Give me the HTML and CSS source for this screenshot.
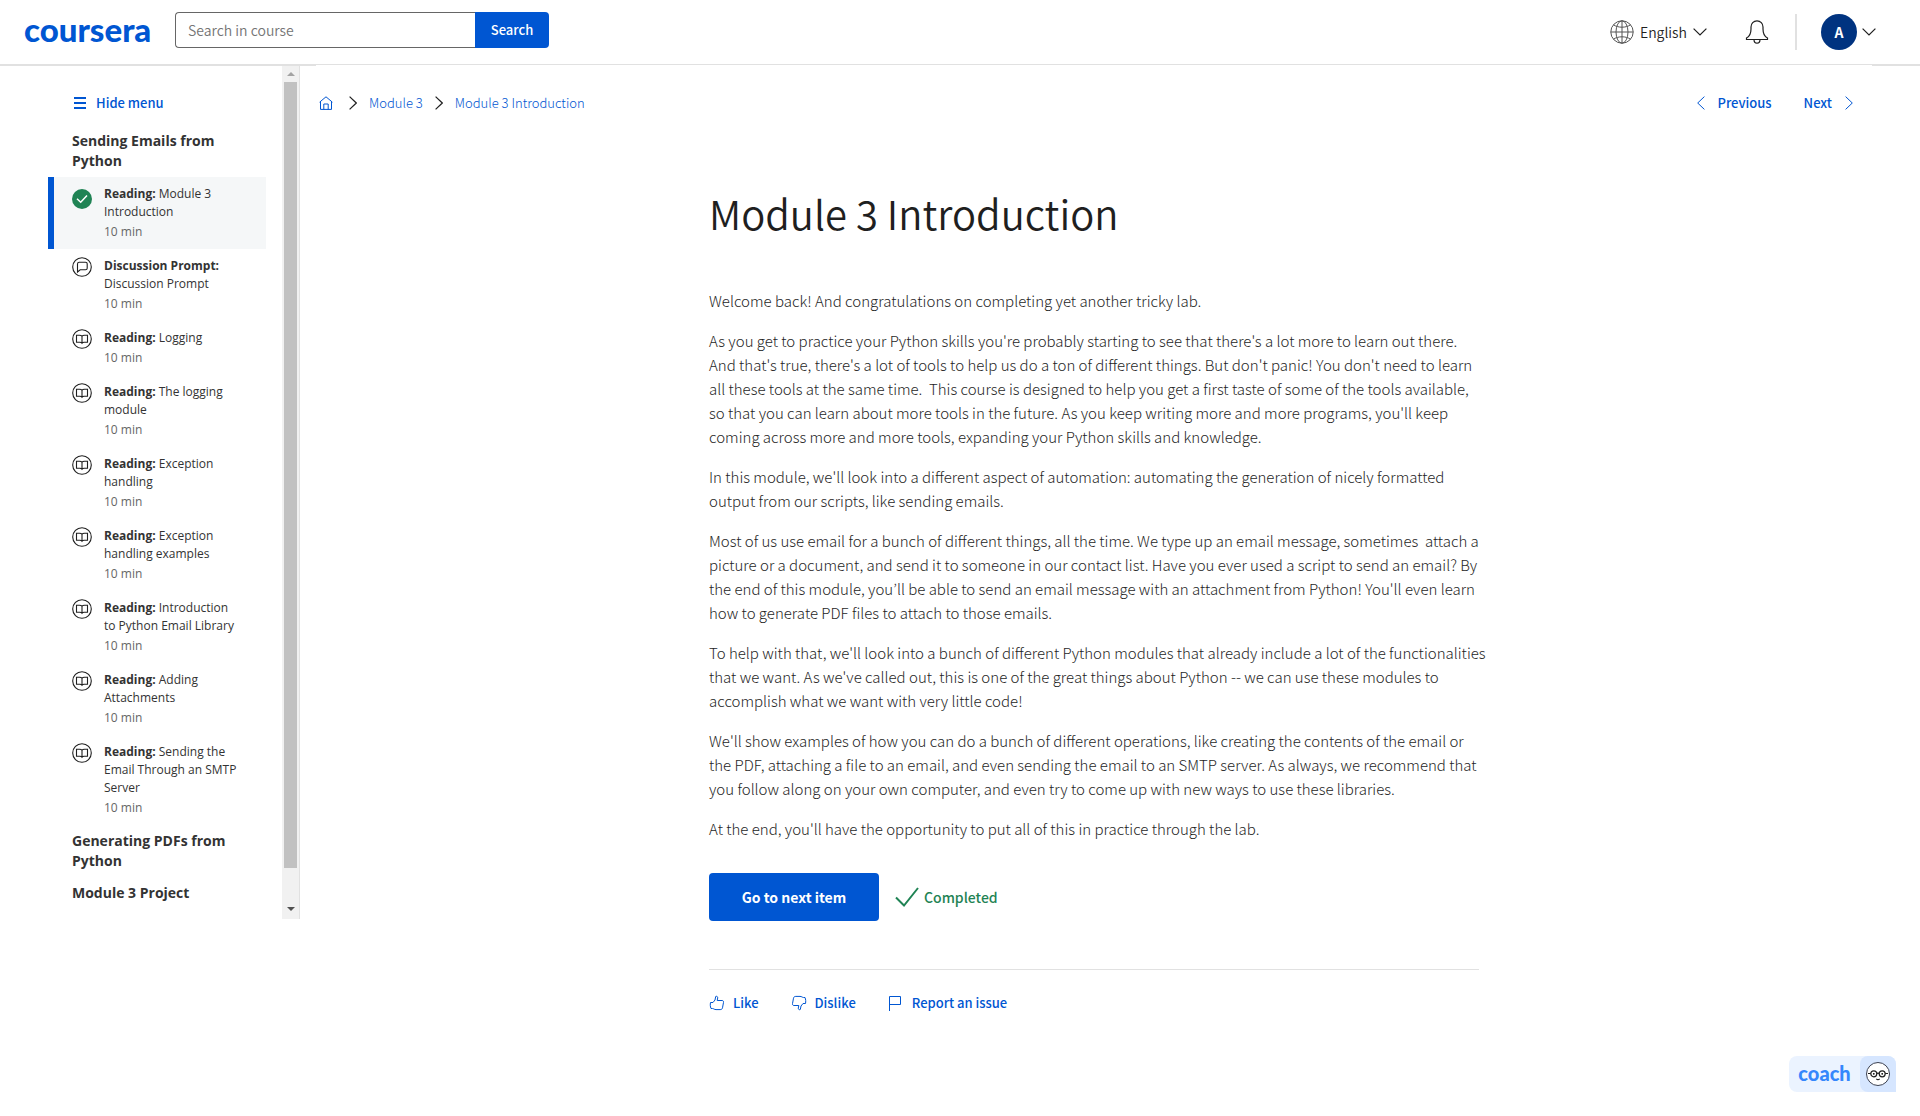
FILE: index.html
```html
<!DOCTYPE html>
<html lang="en">
<head>
<meta charset="utf-8">
<title>Module 3 Introduction | Coursera</title>
<link rel="stylesheet" href="styles.css">
</head>
<body>
<svg class="sprite" aria-hidden="true">
  <symbol id="book" viewBox="0 0 20 20"><circle cx="10" cy="10" r="9.3"/><path d="M10 7.2C9.500 6.400 8.500 6.200 7.500 6.200H4.500V13.200H7.800C8.800 13.200 9.600 13.500 10 14.200C10.400 13.500 11.200 13.200 12.200 13.200H15.500V6.200H12.500C11.500 6.200 10.500 6.400 10 7.200V14"/></symbol>
  <symbol id="chat" viewBox="0 0 20 20"><circle cx="10" cy="10" r="9.3"/><path d="M5.500 15V7C5.500 5.700 6.200 5.200 7.200 5.200H13.500C14.700 5.200 15.200 5.800 15.200 6.800V11.200C15.200 12.300 14.600 12.800 13.500 12.800H8.200Z"/></symbol>
  <symbol id="right" viewBox="0 0 8 14"><path d="M.6.6L7.300 7L.6 13.400"/></symbol>
  <symbol id="left" viewBox="0 0 8 14"><path d="M7.400.6L.7 7L7.400 13.400"/></symbol>
  <symbol id="down" viewBox="0 0 14 8"><path d="M.6.6L7 7L13.400.6"/></symbol>
</svg>

<header class="header">
  <a class="logo" href="#">coursera</a>
  <form class="search">
    <input class="search-input" type="text" placeholder="Search in course" aria-label="Search in course">
    <button class="search-button" type="button">Search</button>
  </form>
  <div class="account">
    <button class="plain language" type="button">
      <svg class="icon" width="24" height="24" viewBox="0 0 24 24"><circle cx="12" cy="12" r="11.2"/><ellipse cx="12" cy="12" rx="6" ry="11.200"/><path d="M.8 12H23.200M12 .8V23.200M3.500 4.800C8 8 16 8 20.500 4.800M3.500 19.200C8 16 16 16 20.500 19.200"/></svg>
      <span>English</span>
      <svg class="icon dark" width="14" height="8"><use href="#down"/></svg>
    </button>
    <button class="plain bell" type="button" aria-label="Notifications">
      <svg class="icon dark" width="24" height="24" viewBox="0 0 24 24"><path d="M1.500 19.500V18C4.500 16.500 6 13 6 9V7C6 3.500 8.500 .8 12 .8S18 3.500 18 7V9C18 13 19.500 16.500 22.500 18V19.500ZM9 19.500C9 21.800 10.300 23.200 12 23.200S15 21.800 15 19.500"/></svg>
    </button>
    <button class="plain profile" type="button">
      <span class="avatar">A</span>
      <svg class="icon dark" width="14" height="8"><use href="#down"/></svg>
    </button>
  </div>
</header>

<div class="layout">
  <aside class="sidebar">
    <nav class="lessons" aria-label="Lessons">
      <button class="plain hide-menu" type="button">
        <svg width="12" height="12" viewBox="0 0 12 12"><path d="M0 0H12V2H0ZM0 5H12V7H0ZM0 10H12V12H0Z" fill="currentColor"/></svg>
        <span>Hide menu</span>
      </button>
      <h2 class="section">Sending Emails from Python</h2>
      <ul class="items">
        <li><a class="item active" href="#"><svg class="item-icon done" viewBox="0 0 20 20"><circle cx="10" cy="10" r="10"/><path d="M5 9.800L8.700 13.200L15 6.500"/></svg><span class="item-text"><span><b>Reading:</b> Module 3 Introduction</span><span class="time">10 min</span></span></a></li>
        <li><a class="item" href="#"><svg class="item-icon"><use href="#chat"/></svg><span class="item-text"><span><b>Discussion Prompt:</b> Discussion Prompt</span><span class="time">10 min</span></span></a></li>
        <li><a class="item" href="#"><svg class="item-icon"><use href="#book"/></svg><span class="item-text"><span><b>Reading:</b> Logging</span><span class="time">10 min</span></span></a></li>
        <li><a class="item" href="#"><svg class="item-icon"><use href="#book"/></svg><span class="item-text"><span><b>Reading:</b> The logging module</span><span class="time">10 min</span></span></a></li>
        <li><a class="item" href="#"><svg class="item-icon"><use href="#book"/></svg><span class="item-text"><span><b>Reading:</b> Exception handling</span><span class="time">10 min</span></span></a></li>
        <li><a class="item" href="#"><svg class="item-icon"><use href="#book"/></svg><span class="item-text"><span><b>Reading:</b> Exception handling examples</span><span class="time">10 min</span></span></a></li>
        <li><a class="item" href="#"><svg class="item-icon"><use href="#book"/></svg><span class="item-text"><span><b>Reading:</b> Introduction to Python Email Library</span><span class="time">10 min</span></span></a></li>
        <li><a class="item" href="#"><svg class="item-icon"><use href="#book"/></svg><span class="item-text"><span><b>Reading:</b> Adding Attachments</span><span class="time">10 min</span></span></a></li>
        <li><a class="item" href="#"><svg class="item-icon"><use href="#book"/></svg><span class="item-text"><span><b>Reading:</b> Sending the Email Through an SMTP Server</span><span class="time">10 min</span></span></a></li>
      </ul>
      <h2 class="section">Generating PDFs from Python</h2>
      <h2 class="section">Module 3 Project</h2>
    </nav>
    <div class="scrollbar" aria-hidden="true">
      <svg class="arrow up" width="8" height="4" viewBox="0 0 8 4"><path d="M4 0L8 4H0Z"/></svg>
      <div class="track"><div class="thumb"></div></div>
      <svg class="arrow" width="8" height="4" viewBox="0 0 8 4"><path d="M0 0H8L4 4Z"/></svg>
    </div>
  </aside>

  <main class="main">
    <div class="toolbar">
      <nav class="crumbs" aria-label="Breadcrumb">
        <a href="#" aria-label="Home"><svg class="icon" width="14" height="14" viewBox="0 0 14 14"><path d="M.6 6.200L7 .8L13.400 6.200M1.500 5.500V13.400H12.500V5.500M4.800 13.400V8H9.200V13.400"/></svg></a>
        <svg class="icon dark" width="8" height="14"><use href="#right"/></svg>
        <a href="#">Module 3</a>
        <svg class="icon dark" width="8" height="14"><use href="#right"/></svg>
        <a href="#">Module 3 Introduction</a>
      </nav>
      <nav class="pager" aria-label="Items">
        <a href="#"><svg class="icon" width="8" height="14"><use href="#left"/></svg>Previous</a>
        <a href="#">Next<svg class="icon" width="8" height="14"><use href="#right"/></svg></a>
      </nav>
    </div>

    <article class="content">
      <h1>Module 3 Introduction</h1>
      <p>Welcome back! And congratulations on completing yet another tricky lab.</p>
      <p>As you get to practice your Python skills you're probably starting to see that there's a lot more to learn out there.<br>And that's true, there's a lot of tools to help us do a ton of different things. But don't panic! You don't need to learn<br>all these tools at the same time.&nbsp; This course is designed to help you get a first taste of some of the tools available,<br>so that you can learn about more tools in the future. As you keep writing more and more programs, you'll keep<br>coming across more and more tools, expanding your Python skills and knowledge.</p>
      <p>In this module, we'll look into a different aspect of automation: automating the generation of nicely formatted<br>output from our scripts, like sending emails.</p>
      <p>Most of us use email for a bunch of different things, all the time. We type up an email message, sometimes&nbsp; attach a<br>picture or a document, and send it to someone in our contact list. Have you ever used a script to send an email? By<br>the end of this module, you’ll be able to send an email message with an attachment from Python! You'll even learn<br>how to generate PDF files to attach to those emails.</p>
      <p>To help with that, we'll look into a bunch of different Python modules that already include a lot of the functionalities<br>that we want. As we've called out, this is one of the great things about Python -- we can use these modules to<br>accomplish what we want with very little code!</p>
      <p>We'll show examples of how you can do a bunch of different operations, like creating the contents of the email or<br>the PDF, attaching a file to an email, and even sending the email to an SMTP server. As always, we recommend that<br>you follow along on your own computer, and even try to come up with new ways to use these libraries.</p>
      <p>At the end, you'll have the opportunity to put all of this in practice through the lab.</p>

      <div class="complete">
        <button class="next" type="button">Go to next item</button>
        <span class="completed"><svg width="24" height="20" viewBox="0 0 24 20"><path d="M1 10.500L9 18.500L23 1"/></svg>Completed</span>
      </div>
      <div class="feedback">
        <button class="plain" type="button"><svg class="icon" width="16" height="16" viewBox="0 0 16 16"><path d="M1.500 7.500H4L6 5L6.700 1.500C7.800 .8 8.900 1.800 8.700 3L8.200 5.500H13C14.300 5.500 14.700 6.400 14.500 7.400L13.500 12.800C13.200 14.100 12.500 14.600 11.200 14.600H7C5.300 14.600 4.500 13.500 3.500 13.500H2C1.200 11.500 1.100 9.500 1.500 7.500Z"/></svg>Like</button>
        <button class="plain" type="button"><svg class="icon" width="16" height="16" viewBox="0 0 16 16"><path d="M14.500 8.500H12L10 11L9.300 14.500C8.200 15.200 7.100 14.200 7.300 13L7.800 10.500H3C1.700 10.500 1.300 9.600 1.500 8.600L2.500 3.200C2.800 1.900 3.500 1.400 4.800 1.400H9C10.700 1.400 11.500 2.500 12.500 2.500H14C14.800 4.500 14.900 6.500 14.500 8.500Z"/></svg>Dislike</button>
        <button class="plain" type="button"><svg class="icon" width="16" height="16" viewBox="0 0 16 16"><path d="M1.500 16V1.500H12.500V9.500H1.500"/></svg>Report an issue</button>
      </div>
    </article>
  </main>
</div>

<button class="coach" type="button">
  <span class="coach-name">coach</span>
  <span class="coach-face"><svg width="24" height="24" viewBox="0 0 24 24"><circle cx="12" cy="12" r="11.500" fill="#fff" stroke="#3b4152"/><g fill="none" stroke="#1f1f1f" stroke-width="1.200"><circle cx="7.800" cy="11.800" r="3"/><circle cx="16.200" cy="11.800" r="3"/><path d="M2 11.500H4.800M10.800 11.500C11.300 10.900 12.700 10.900 13.200 11.500M19.200 11.500H22M10.300 16.800C11.300 17.800 12.700 17.800 13.700 16.800"/></g><circle cx="7.800" cy="11.800" r=".9"/><circle cx="16.200" cy="11.800" r=".9"/></svg></span>
</button>
</body>
</html>
```

FILE: styles.css
```css
* { box-sizing: border-box; }

body {
  margin: 0;
  background: #fff;
  color: #1f1f1f;
  font: 350 14px/24px "Source Sans Pro", "Noto Sans CJK KR", sans-serif;
}

a { color: #0056d2; text-decoration: none; }
h1, h2, p, ul { margin: 0; padding: 0; }
button, input { font: inherit; }
svg { display: block; flex: none; }

.sprite { position: absolute; width: 0; height: 0; }
.icon { fill: none; stroke: currentColor; stroke-width: 1; }
.icon.dark { color: #1f1f1f; stroke-width: 1.2; }
.plain { display: flex; align-items: center; padding: 0; border: 0; background: none; color: inherit; cursor: pointer; }

.header {
  display: flex;
  align-items: center;
  height: 66px;
  padding: 0 44px 0 24px;
  border-bottom: 2px solid #e1e1e1;
}
.logo {
  width: 151px;
  padding-bottom: 6px;
  color: #0056d2;
  font: 900 33px/36px "Lato", sans-serif;
}
.search { display: flex; height: 36px; margin-bottom: 4px; }
.search-input {
  width: 300px;
  padding: 0 12px;
  border: 1px solid #666;
  border-right: 0;
  border-radius: 4px 0 0 4px;
  color: #1f1f1f;
}
.search-input::placeholder { color: #757575; }
.search-button {
  width: 74px;
  padding: 0;
  border: 0;
  border-radius: 0 4px 4px 0;
  background: #0056d2;
  color: #fff;
  font-size: 13px;
  font-weight: 500;
}
.account { display: flex; align-items: center; margin-left: auto; }
.language { gap: 6px; }
.language > .icon:first-child { color: #555; }
.bell { padding: 0 26px 0 38px; }
.profile { gap: 5px; padding-left: 24px; border-left: 2px solid #e1e1e1; }
.avatar {
  width: 36px;
  height: 36px;
  border-radius: 50%;
  background: #003380;
  color: #fff;
  font-weight: 700;
  line-height: 36px;
}

.layout { display: flex; align-items: flex-start; }

.sidebar {
  display: flex;
  flex: none;
  width: 300px;
  border-right: 1px solid #e1e1e1;
  font-family: "Open Sans", sans-serif;
}
.lessons { flex: 1; padding: 25px 16px 10px 48px; }
.hide-menu {
  gap: 10px;
  margin: 0 0 10px 26px;
  color: #0056d2;
  font: 500 13px/24px "Source Sans Pro", "Noto Sans CJK KR", sans-serif;
}
.section { padding: 6px 40px 6px 24px; color: #333; font-size: 14px; font-weight: 700; line-height: 20px; }
.items { list-style: none; }
.item {
  display: flex;
  gap: 12px;
  padding: 8px 24px 8px 18px;
  border-left: 6px solid transparent;
  color: #333;
  font-size: 12px;
  font-weight: 400;
  line-height: 18px;
}
.item b { font-weight: 700; }
.item.active { border-color: #0056d2; background: #f5f7f8; }
.item-icon { width: 20px; height: 20px; fill: none; stroke: #1f1f1f; stroke-width: 1.1; }
.item-icon.done { margin-top: 4px; fill: #1f8354; stroke: none; }
.item-icon.done path { fill: none; stroke: #fff; stroke-width: 1.5; }
.item-text { display: flex; flex-direction: column; gap: 2px; }
.time { color: #666; }

.scrollbar {
  display: flex;
  flex-direction: column;
  align-items: center;
  width: 17px;
  padding: 6px 0 8px;
  background: #f1f1f1;
}
.arrow { fill: #505050; }
.arrow.up { fill: #a3a3a3; }
.track { flex: 1; width: 13px; margin: 6px 0; }
.thumb { height: 96%; background: #c1c1c1; }

.main { flex: 1; padding: 0 48px 0 16px; }
.toolbar {
  display: flex;
  justify-content: space-between;
  margin-top: -1px;
  padding: 26px 19px 0 3px;
  background: #fff;
  font-size: 13px;
}
.crumbs, .pager, .pager a { display: flex; align-items: center; }
.crumbs { gap: 12px; font-weight: 300; }
.crumbs a:first-child { margin-right: 4px; }
.pager { gap: 32px; font-weight: 500; }
.pager a { gap: 13px; }

.content { max-width: 770px; margin: 0 auto; }
h1 { margin: 68px 0 46px; font-size: 40px; font-weight: 350; line-height: 60px; }
p { margin-bottom: 16px; font-size: 15px; font-weight: 300; white-space: nowrap; }
.complete {
  display: flex;
  align-items: center;
  gap: 16px;
  margin-top: 32px;
  padding-bottom: 48px;
  border-bottom: 1px solid #e1e1e1;
}
.next {
  width: 170px;
  height: 48px;
  border: 0;
  border-radius: 4px;
  background: #0056d2;
  color: #fff;
  font-weight: 700;
}
.completed { display: flex; align-items: center; gap: 5px; color: #1f8354; font-weight: 500; }
.completed svg { fill: none; stroke: #1f8354; stroke-width: 2; }
.feedback { display: flex; gap: 32px; margin: 21px 0 24px; color: #0056d2; font-size: 13px; font-weight: 500; }
.feedback .plain { gap: 8px; }

.coach {
  position: fixed;
  right: 24px;
  bottom: 24px;
  display: flex;
  align-items: center;
  width: 107px;
  height: 36px;
  padding: 0;
  border: 0;
  border-radius: 8px 8px 0 8px;
  background: #ebf3ff;
}
.coach-name { flex: 1; padding-bottom: 2px; color: #3587fc; font: 900 20px/24px "Lato", sans-serif; }
.coach-face { padding: 6px; border-radius: 8px 8px 0 8px; background: #d6e6ff; }
```
